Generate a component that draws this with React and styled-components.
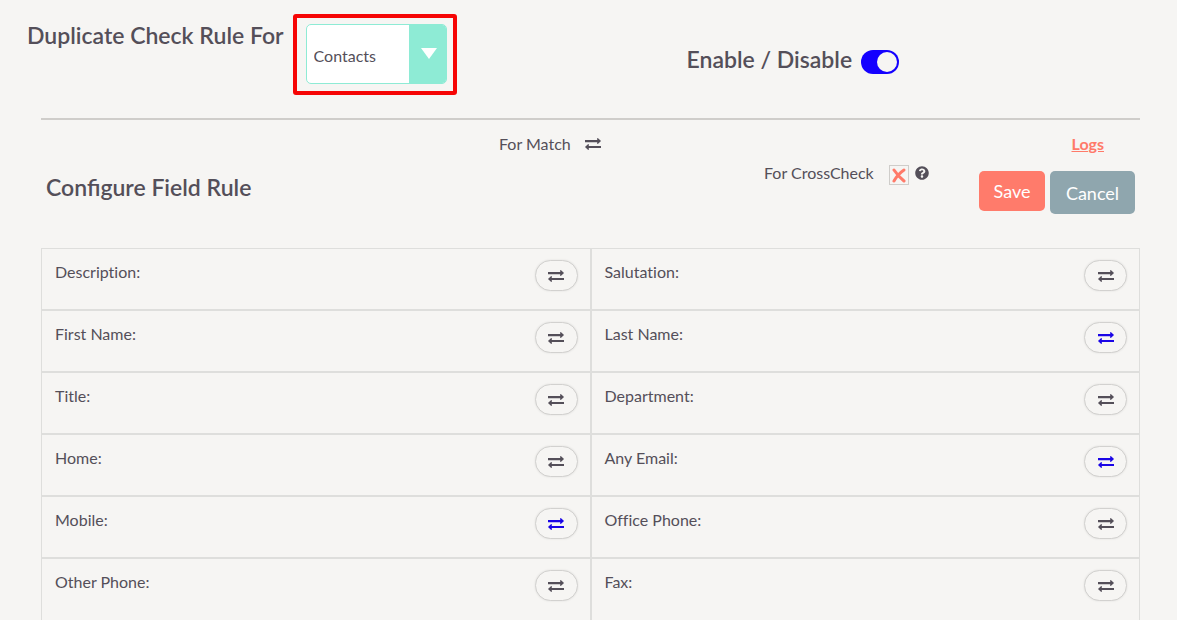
import React, { useState } from "react";
import styled, { createGlobalStyle } from "styled-components";
import { FaQuestionCircle } from "react-icons/fa";

const GlobalStyle = createGlobalStyle`
  *, *::before, *::after { box-sizing: border-box; }
  body {
    margin: 0;
    background: #f6f5f3;
    color: #544f59;
    font: 400 16px/24px Lato, "Open Sans", sans-serif;
  }
  button, select { font: inherit; color: inherit; }
`;

const Page = styled.main`
  display: flex;
  flex-direction: column;
  padding: 14px 37px 0 41px;
`;

const TopBar = styled.header`
  display: grid;
  grid-template-columns: 659fr 453fr;
  margin-left: -14px;
  height: 106px;
  align-items: start;
`;

const Heading = styled.h1`
  margin: 0;
  font-size: 23px;
  line-height: 32px;
  font-weight: 600;
`;

const RuleGroup = styled.div`
  display: flex;
  align-items: flex-start;
  gap: 9px;
  ${Heading} { padding-top: 5px; }
`;

const Highlight = styled.div`
  padding: 6px 6px 7px 9px;
  border: 4px solid #f60505;
  border-radius: 3px;
`;

const SelectBox = styled.div`
  display: grid;
  width: 141px;
  height: 60px;
  border: 1px solid #8eebd5;
  border-radius: 5px;
  overflow: hidden;
  background: #fff;
  > * { grid-area: 1 / 1; }
`;

const ModuleSelect = styled.select`
  appearance: none;
  border: 0;
  background: transparent;
  padding: 4px 44px 0 7px;
  width: 100%;
`;

const SelectArrow = styled.span`
  justify-self: end;
  display: flex;
  justify-content: center;
  width: 37px;
  padding: 23px 0 0 3px;
  background: #8eebd5;
  pointer-events: none;
`;

const ToggleLabel = styled.label`
  display: flex;
  align-items: center;
  gap: 9px;
  padding-top: 29px;
  font-size: 23px;
  line-height: 32px;
  font-weight: 600;
`;

const Toggle = styled.input`
  appearance: none;
  display: flex;
  align-items: center;
  justify-content: flex-start;
  width: 38px;
  height: 24px;
  margin: 6px 0 0;
  padding: 2px;
  border-radius: 12px;
  background: #b5b5b5;
  &::before {
    content: "";
    width: 20px;
    height: 20px;
    border-radius: 50%;
    background: #f6f5f3;
  }
  &:checked { background: #1400ff; justify-content: flex-end; }
`;

const Divider = styled.hr`
  width: 100%;
  height: 2px;
  margin: -2px 0 0;
  border: 0;
  background: #cfcdca;
`;

const Toolbar = styled.section`
  display: grid;
  grid-template-columns: 458fr 265fr 215fr 161fr;
  align-items: start;
  height: 128px;
  padding-top: 12px;
`;

const SectionTitle = styled.h2`
  margin: 0;
  padding: 39px 0 0 5px;
  font-size: 23px;
  line-height: 32px;
  font-weight: 600;
`;

const Legend = styled.div`
  display: flex;
  align-items: center;
  gap: ${(p) => (p.$lower ? 15 : 13)}px;
  padding-top: ${(p) => (p.$lower ? 29 : 0)}px;
`;

const CrossCheck = styled.button`
  display: flex;
  align-items: center;
  justify-content: center;
  width: 20px;
  height: 20px;
  margin-top: 3px;
  padding: 0;
  border: 1px solid #cfcdca;
  background: #f6f5f3;
`;

const Marks = styled.span`
  display: flex;
  align-items: center;
  gap: 6px;
`;

const Actions = styled.div`
  display: flex;
  flex-direction: column;
  padding-right: 5px;
`;

const LogsLink = styled.a`
  align-self: flex-end;
  margin: 0 31px 15px 0;
  color: #ff7a69;
  font-weight: 700;
  text-decoration: underline;
`;

const ButtonRow = styled.div`
  display: flex;
  align-items: flex-start;
  justify-content: flex-end;
  gap: 5px;
`;

const ActionButton = styled.button`
  width: ${(p) => (p.$secondary ? 85 : 66)}px;
  height: ${(p) => (p.$secondary ? 43 : 40)}px;
  padding: 0;
  border: 0;
  border-radius: 5px;
  background: ${(p) => (p.$secondary ? "#8fa6ae" : "#ff7b6b")};
  color: #fff;
  font-size: 18px;
`;

const FieldGrid = styled.ul`
  display: grid;
  grid-template-columns: 1fr 1fr;
  margin: 0;
  padding: 0;
  list-style: none;
`;

const Field = styled.li`
  display: flex;
  justify-content: space-between;
  align-items: flex-start;
  height: 62px;
  padding: 11px 12px 0 13px;
  border: 1px solid #dededc;
  font-variant-ligatures: none;
  &:nth-last-child(-n + 2) { border-bottom: 0; }
`;

const MatchButton = styled.button`
  display: flex;
  align-items: center;
  justify-content: center;
  width: 43px;
  height: 31px;
  padding: 0;
  border: 1px solid #d2d1cf;
  border-radius: 16px;
  background: #f6f5f3;
  box-shadow: 0 0 2px #dddcda;
  color: ${(p) => (p.$on ? "#1a05e6" : "#544f59")};
`;

function ExchangeIcon() {
  return (
    <svg width="18" height="14" viewBox="0 0 18 14" fill="currentColor" aria-hidden="true">
      <path d="M1 3h12.2V1.4q0-.6.6-.3l3 2.6q.3.3 0 .6l-3 2.6q-.6.3-.6-.3V5.2H1z" />
      <path d="M17 8.9H4.8V7.4q0-.6-.6-.3l-3 2.6q-.3.3 0 .6l3 2.6q.6.3.6-.3v-1.5H17z" />
    </svg>
  );
}

const FIELDS = [
  ["Description", false], ["Salutation", false],
  ["First Name", false], ["Last Name", true],
  ["Title", false], ["Department", false],
  ["Home", false], ["Any Email", true],
  ["Mobile", true], ["Office Phone", false],
  ["Other Phone", false], ["Fax", false],
];

function FieldRow({ name, initial }) {
  const [on, setOn] = useState(initial);
  return (
    <Field>
      <span>{name}:</span>
      <MatchButton type="button" $on={on} aria-pressed={on} aria-label={`Match ${name}`} onClick={() => setOn(!on)}>
        <ExchangeIcon />
      </MatchButton>
    </Field>
  );
}

export default function App() {
  return (
    <>
      <GlobalStyle />
      <Page>
        <TopBar>
          <RuleGroup>
            <Heading as="label" htmlFor="module">Duplicate Check Rule For</Heading>
            <Highlight>
              <SelectBox>
                <ModuleSelect id="module" defaultValue="Contacts">
                  <option>Contacts</option>
                </ModuleSelect>
                <SelectArrow>
                  <svg width="16" height="12" viewBox="0 0 16 12" aria-hidden="true">
                    <path d="M0 0h16L8 11z" fill="#fff" />
                  </svg>
                </SelectArrow>
              </SelectBox>
            </Highlight>
          </RuleGroup>
          <ToggleLabel>
            Enable / Disable
            <Toggle type="checkbox" role="switch" defaultChecked />
          </ToggleLabel>
        </TopBar>
        <Divider />
        <Toolbar>
          <SectionTitle>Configure Field Rule</SectionTitle>
          <Legend>For Match <ExchangeIcon /></Legend>
          <Legend $lower>
            For CrossCheck
            <Marks>
              <CrossCheck type="button" aria-label="Cross check">
                <svg width="16" height="16" viewBox="0 0 16 16" aria-hidden="true">
                  <path d="M3 3q4 6 10 11M13 3Q7 7 3 14" fill="none" stroke="#ff7a69" strokeWidth="3" strokeLinecap="round" />
                </svg>
              </CrossCheck>
              <FaQuestionCircle size={14} aria-hidden="true" />
            </Marks>
          </Legend>
          <Actions>
            <LogsLink href="#logs">Logs</LogsLink>
            <ButtonRow>
              <ActionButton type="button">Save</ActionButton>
              <ActionButton type="button" $secondary>Cancel</ActionButton>
            </ButtonRow>
          </Actions>
        </Toolbar>
        <FieldGrid>
          {FIELDS.map(([name, on]) => <FieldRow key={name} name={name} initial={on} />)}
        </FieldGrid>
      </Page>
    </>
  );
}
